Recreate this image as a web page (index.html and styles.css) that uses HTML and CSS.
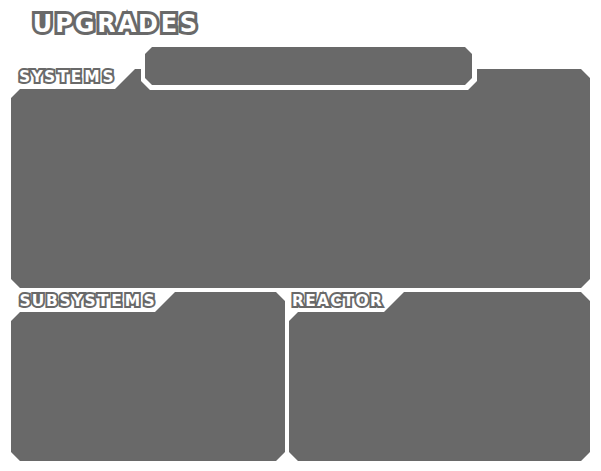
FILE: index.html
```
<!DOCTYPE html>
<html lang="en">
<head>
<meta charset="utf-8">
<title>Upgrades</title>
<link rel="stylesheet" href="styles.css">
</head>
<body>
<main class="screen">
  <h1 class="title"><svg class="lettering" width="180" height="36"><text class="large" y="27" x="13.5 35 55.5 77.5 98 119 140 159.5">UPGRADES</text></svg></h1>
  <section class="systems">
    <div class="status"></div>
    <div class="panel systems-panel"></div>
    <h2 class="label"><svg class="lettering" width="110" height="20"><text class="small" y="15" x="9.5 22 34.5 48 61 77 93">SYSTEMS</text></svg></h2>
  </section>
  <div class="lower">
    <section class="group">
      <div class="panel subsystems-panel"></div>
      <h2 class="label"><svg class="lettering" width="150" height="20"><text class="small" y="15" x="11 24 38 51 63.5 76 89 102.5 118.5 135">SUBSYSTEMS</text></svg></h2>
    </section>
    <section class="group">
      <div class="panel reactor-panel"></div>
      <h2 class="label"><svg class="lettering" width="110" height="20"><text class="small" y="15" x="6 18.5 31 44 56.5 70 84">REACTOR</text></svg></h2>
    </section>
  </div>
</main>
</body>
</html>
```
FILE: styles.css
```
* { box-sizing: border-box; margin: 0; }
body { background: #fff; overflow: hidden; }
.screen { width: 601px; height: 471px; padding: 5px 11px 10px; display: flex; flex-direction: column; }
.title { height: 42px; padding-left: 18px; }
.lettering { display: block; overflow: visible; }
.lettering text {
  font-family: "DejaVu Sans", sans-serif;
  font-weight: 700;
  fill: #fff;
  stroke: #696969;
  paint-order: stroke;
  stroke-linejoin: miter;
  text-anchor: middle;
}
.large { font-size: 24px; stroke-width: 6px; }
.small { font-size: 16px; stroke-width: 4px; }
.lettering .small { font-size: 15.5px; }
.systems { position: relative; height: 241px; padding-top: 22px; margin-bottom: 4px; }
.panel { background: #696969; height: 100%; }
.systems-panel {
  width: 579px;
  clip-path: polygon(0 29px, 9px 20px, 104px 20px, 124px 0, 130px 0, 130px 12px, 139px 21px, 457px 21px, 466px 12px, 466px 0, 570px 0, 100% 9px, 100% calc(100% - 9px), 570px 100%, 9px 100%, 0 calc(100% - 9px));
}
.status {
  position: absolute;
  left: 134px;
  top: 0;
  width: 327px;
  height: 38px;
  background: #696969;
  clip-path: polygon(0 7px, 7px 0, 320px 0, 100% 7px, 100% 31px, 320px 100%, 7px 100%, 0 31px);
}
.lower { display: grid; grid-template-columns: 274px 301px; gap: 4px; height: 169px; }
.group { position: relative; }
.label { position: absolute; left: 3px; top: -1px; }
.systems .label { left: 4px; top: 20px; }
.subsystems-panel { clip-path: polygon(0 29px, 9px 20px, 144px 20px, 164px 0, 265px 0, 100% 9px, 100% 160px, 265px 100%, 9px 100%, 0 160px); }
.reactor-panel { clip-path: polygon(0 29px, 9px 20px, 95px 20px, 115px 0, 292px 0, 100% 9px, 100% 160px, 292px 100%, 9px 100%, 0 160px); }
```
